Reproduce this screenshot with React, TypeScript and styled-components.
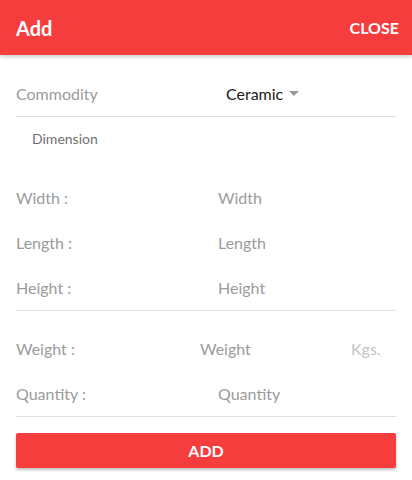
import React from "react";
import styled, { createGlobalStyle } from "styled-components";

const Global = createGlobalStyle`
  html, body { margin: 0; padding: 0; background: #fff; }
  body { font-family: Lato, "Open Sans", sans-serif; }
  * { box-sizing: border-box; }
`;

const RED = "#f53d3d";

const Page = styled.div`
  width: 412px;
  min-height: 480px;
  background: #fff;
  display: flex;
  flex-direction: column;
`;

const Header = styled.header`
  height: 55px;
  background: ${RED};
  display: flex;
  align-items: center;
  justify-content: space-between;
  padding: 0 13px 0 16px;
  box-shadow: 0 2px 4px rgba(0, 0, 0, 0.2);
  position: relative;
  z-index: 1;
`;

const Title = styled.h1`
  margin: 0;
  color: #fff;
  font-size: 20px;
  font-weight: 700;
`;

const CloseButton = styled.button`
  border: 0;
  background: none;
  color: #fff;
  font-family: inherit;
  font-size: 16px;
  font-weight: 700;
  padding: 0;
  cursor: pointer;
`;

const Content = styled.main`
  padding: 17px 16px 0;
  display: flex;
  flex-direction: column;
`;

const Row = styled.div<{ $h?: number; $cols?: string; $divider?: boolean }>`
  height: ${(p) => p.$h ?? 45}px;
  padding-bottom: 2px;
  display: grid;
  grid-template-columns: ${(p) => p.$cols ?? "202px 1fr"};
  align-items: center;
  border-bottom: ${(p) => (p.$divider ? "1px solid #dedede" : "0")};
`;

const Label = styled.span`
  color: #9b9b9b;
  font-size: 16px;
`;

const Value = styled.span<{ $tone?: "dark" | "light" | "faint" }>`
  color: ${(p) => (p.$tone === "dark" ? "#1a1a1a" : p.$tone === "faint" ? "#c4c4c4" : "#9b9b9b")};
  font-size: 16px;
  display: flex;
  align-items: center;
  gap: 6px;
`;

const Caret = styled.span`
  width: 0;
  height: 0;
  border-left: 5px solid transparent;
  border-right: 5px solid transparent;
  border-top: 5px solid #999;
`;

const Section = styled.div`
  height: 44px;
  padding-bottom: 2px;
  display: flex;
  align-items: center;
  padding-left: 16px;
  color: #707070;
  font-size: 14px;
`;

const Group = styled.div<{ $top: number }>`
  margin-top: ${(p) => p.$top}px;
  display: flex;
  flex-direction: column;
`;

const AddButton = styled.button`
  margin-top: 16px;
  height: 35px;
  width: 100%;
  border: 0;
  border-radius: 2px;
  background: ${RED};
  color: #fff;
  font-family: inherit;
  font-size: 16px;
  font-weight: 700;
  box-shadow: 0 2px 3px rgba(0, 0, 0, 0.25);
`;

export default function App() {
  return (
    <Page>
      <Global />
      <Header>
        <Title>Add</Title>
        <CloseButton>CLOSE</CloseButton>
      </Header>
      <Content>
        <Row $cols="210px 1fr" $divider>
          <Label>Commodity</Label>
          <Value $tone="dark">
            Ceramic <Caret />
          </Value>
        </Row>
        <Section>Dimension</Section>
        <Group $top={15}>
          <Row>
            <Label>Width :</Label>
            <Value>Width</Value>
          </Row>
          <Row>
            <Label>Length :</Label>
            <Value>Length</Value>
          </Row>
          <Row $divider>
            <Label>Height :</Label>
            <Value>Height</Value>
          </Row>
        </Group>
        <Group $top={16}>
          <Row $cols="184px 1fr 45px">
            <Label>Weight :</Label>
            <Value>Weight</Value>
            <Value $tone="faint">Kgs.</Value>
          </Row>
          <Row $divider>
            <Label>Quantity :</Label>
            <Value>Quantity</Value>
          </Row>
        </Group>
        <AddButton>ADD</AddButton>
      </Content>
    </Page>
  );
}
